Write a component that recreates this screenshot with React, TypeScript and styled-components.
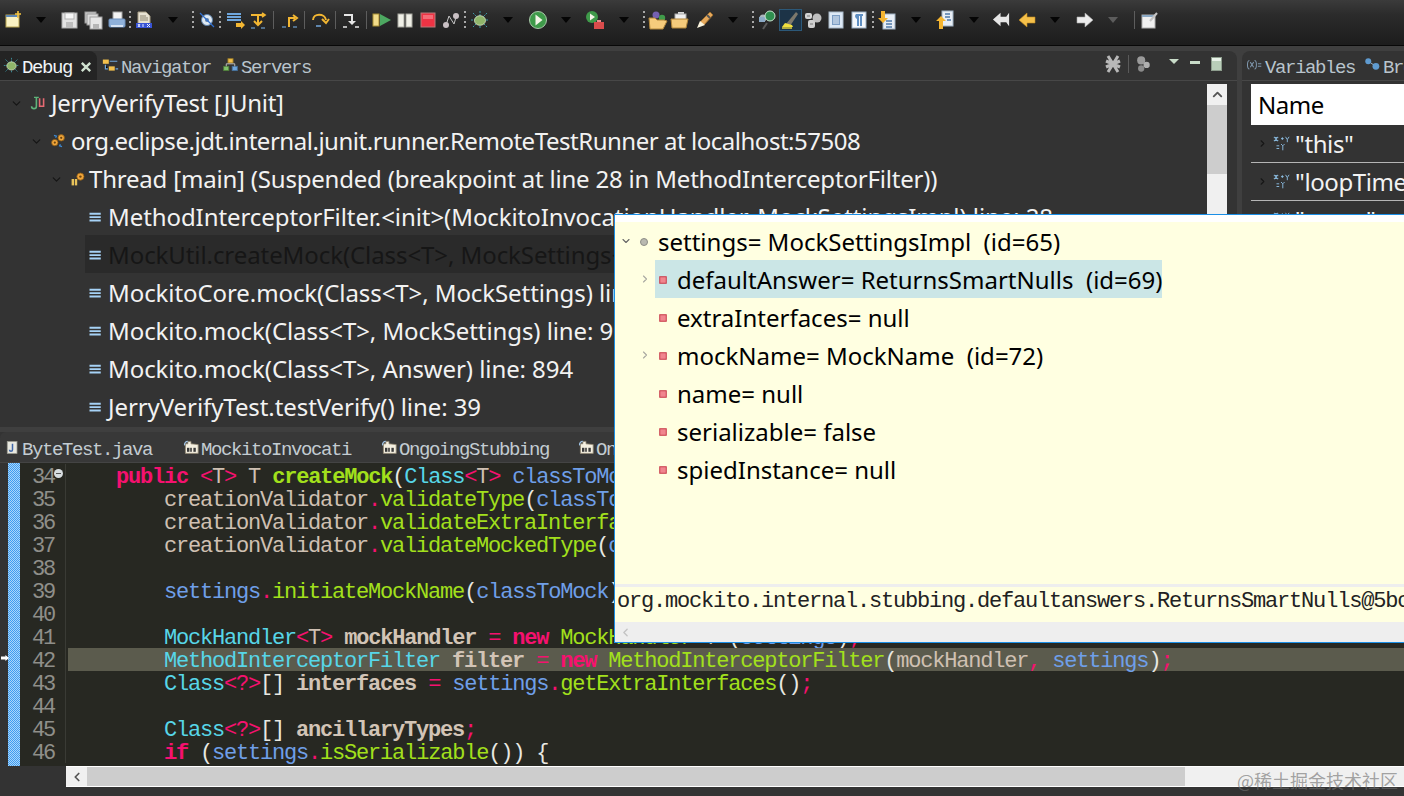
import React from 'react';
import styled, { createGlobalStyle } from 'styled-components';
import { ChevronDown, ChevronRight, ChevronUp, ChevronLeft } from 'lucide-react';

const GlobalStyle = createGlobalStyle`
  html, body { margin: 0; padding: 0; background: #333; overflow: hidden; }
  * { box-sizing: border-box; }
`;

const UI_FONT = `"Noto Sans", "Open Sans", sans-serif`;
const MONO = `"Liberation Mono", "DejaVu Sans Mono", monospace`;

const Page = styled.div`
  position: relative;
  width: 1404px;
  height: 796px;
  overflow: hidden;
  display: flex;
  flex-direction: column;
  background: #333;
`;

const Toolbar = styled.div`
  height: 46px;
  flex-shrink: 0;
  display: flex;
  align-items: center;
  padding-bottom: 6px;
  background: linear-gradient(#3b3b3b 0, #2c2c2c 14px, #1d1d1d 44px);
  border-bottom: 1px solid #080808;
`;

const Slot = styled.div<{ $gap: number }>`
  width: 12px;
  height: 24px;
  flex-shrink: 0;
  margin-left: ${p => p.$gap}px;
  display: flex;
  align-items: center;
  justify-content: center;
`;

const Drop = styled.span<{ $off?: boolean }>`
  border-left: 5px solid transparent;
  border-right: 5px solid transparent;
  border-top: 6px solid ${p => (p.$off ? '#5c5c5c' : '#050505')};
`;

const Grip = styled.span`
  width: 2px;
  height: 17px;
  flex-shrink: 0;
  background: repeating-linear-gradient(#a8a8a8 0 2px, transparent 2px 5px);
`;

const Rule = styled.span`
  width: 1px;
  height: 18px;
  flex-shrink: 0;
  background: #5d5d5d;
`;

const ActiveBox = styled.span`
  width: 23px;
  height: 22px;
  flex-shrink: 0;
  display: flex;
  align-items: center;
  justify-content: center;
  background: #1c3347;
  border: 1px solid #2c5878;
`;

const Svg = styled.svg<{ $s?: number }>`
  width: ${p => p.$s ?? 20}px;
  height: ${p => p.$s ?? 20}px;
  flex-shrink: 0;
  display: block;
`;

const Band = styled.div`
  height: 5px;
  flex-shrink: 0;
  background: #3f3f3f;
`;

const TopRow = styled.div`
  height: 376px;
  flex-shrink: 0;
  display: flex;
  background: #3f3f3f;
`;

const Panel = styled.section<{ $w: number }>`
  width: ${p => p.$w}px;
  flex-shrink: 0;
  display: flex;
  flex-direction: column;
  overflow: hidden;
  background: #333;
  border-top-right-radius: 8px;
`;

const RightPanel = styled(Panel)`
  margin-left: 5px;
  border-top-right-radius: 0;
  border-top-left-radius: 8px;
`;

const TabBar = styled.div`
  height: 30px;
  flex-shrink: 0;
  display: flex;
  align-items: center;
  border-bottom: 1px solid #474747;
`;

const Tab = styled.div<{ $w?: number; $active?: boolean; $pl?: number }>`
  height: 29px;
  width: ${p => (p.$w ? `${p.$w}px` : 'auto')};
  flex-shrink: 0;
  display: flex;
  align-items: center;
  gap: 2px;
  padding-left: ${p => p.$pl ?? 0}px;
  white-space: pre;
  color: ${p => (p.$active ? '#f0f4f8' : '#b9c4cc')};
  background: ${p => (p.$active ? '#242424' : 'transparent')};
  border-top-right-radius: ${p => (p.$active ? 8 : 0)}px;
`;

const TabLabel = styled.span`
  font: 19px/29px ${MONO};
  letter-spacing: -1.4px;
  padding-top: 6px;
`;

const TabClose = styled.span`
  margin-left: 5px;
  padding-top: 2px;
`;

const ViewActions = styled.div`
  margin-left: auto;
  margin-bottom: 3px;
  padding-right: 15px;
  display: flex;
  align-items: center;
  gap: 5px;
`;

const ActionRule = styled.span`
  width: 1px;
  height: 18px;
  background: #5a5a5a;
`;

const MenuTriangle = styled.span`
  margin: 0 0 6px 12px;
  border-left: 5px solid transparent;
  border-right: 5px solid transparent;
  border-top: 5px solid #c9dcc9;
`;

const MinBtn = styled.span`
  width: 10px;
  height: 3px;
  margin: 0 6px 4px 6px;
  background: #c9dcc9;
`;

const MaxBtn = styled.span`
  width: 11px;
  height: 14px;
  background: linear-gradient(#e8f2e8 0 3px, #b9ceb9 3px);
  border: 1px solid #8d9d8d;
`;

const DebugBody = styled.div`
  flex: 1;
  min-height: 0;
  display: flex;
  overflow: hidden;
`;

const Tree = styled.div`
  flex: 1;
  min-width: 0;
  padding-top: 2px;
  overflow: hidden;
`;

const Row = styled.div<{ $indent: number; $track: number }>`
  height: 38px;
  display: flex;
  align-items: center;
  padding-top: 2px;
  padding-left: ${p => p.$indent}px;
  white-space: nowrap;
  font: 400 24px/36px ${UI_FONT};
  letter-spacing: ${p => p.$track}px;
  color: #f2f2f2;
`;

const FrameRow = styled(Row)<{ $current?: boolean }>`
  padding-left: 0;
  margin-left: ${p => p.$indent}px;
  color: ${p => (p.$current ? '#161616' : '#f2f2f2')};
  background: ${p => (p.$current ? '#2a2a2a' : 'transparent')};
`;

const Twist = styled.span<{ $w?: number }>`
  width: ${p => p.$w ?? 20}px;
  flex-shrink: 0;
  display: flex;
  align-items: center;
`;

const IconBox = styled.span<{ $w: number }>`
  width: ${p => p.$w}px;
  flex-shrink: 0;
  display: flex;
  align-items: center;
`;

const VScroll = styled.div`
  width: 20px;
  height: 131px;
  margin: 3px 10px 0 0;
  flex-shrink: 0;
  display: flex;
  flex-direction: column;
  background: #f0f0f0;
`;

const VArrow = styled.div`
  height: 21px;
  display: flex;
  align-items: center;
  justify-content: center;
`;

const VThumb = styled.div`
  height: 69px;
  background: #cdcdcd;
`;

const VarTable = styled.div`
  margin: 3px 0 0 9px;
`;

const VarHeader = styled.div`
  height: 41px;
  padding-left: 7px;
  background: #fff;
  color: #000;
  font: 400 24px/41px ${UI_FONT};
  letter-spacing: -0.5px;
`;

const VarRow = styled.div`
  height: 38px;
  display: flex;
  align-items: center;
  padding-left: 6px;
  white-space: nowrap;
  color: #f2f2f2;
  font: 400 24px/38px ${UI_FONT};
  letter-spacing: -0.4px;
  border-bottom: 1px solid #b5b5b5;
`;

const Sash = styled.div`
  height: 5px;
  flex-shrink: 0;
  background: #3f3f3f;
`;

const Editor = styled.section`
  flex: 1;
  min-height: 0;
  display: flex;
  flex-direction: column;
  background: #333;
`;

const EditorTabs = styled.div`
  height: 31px;
  flex-shrink: 0;
  display: flex;
  align-items: center;
  padding-left: 5px;
  background: #383838;
  border-top-left-radius: 6px;
  border-bottom: 1px solid #444;
`;

const EditorTab = styled.div<{ $w: number }>`
  width: ${p => p.$w}px;
  flex-shrink: 0;
  display: flex;
  align-items: center;
  gap: 2px;
  color: #c3ccd2;
  white-space: pre;
`;

const EditorBody = styled.div`
  height: 303px;
  flex-shrink: 0;
  display: flex;
  padding-left: 8px;
`;

const ChangeStrip = styled.div`
  position: relative;
  width: 12px;
  flex-shrink: 0;
  background: repeating-conic-gradient(#3f9cf0 0 25%, #a9d6fb 0 50%) 0 0 / 2px 2px;
`;

const PointerMark = styled.span`
  position: absolute;
  left: -7px;
  top: 192px;
  width: 8px;
  height: 6px;
  background: #fff;
  clip-path: polygon(0 25%, 55% 25%, 55% 0, 100% 50%, 55% 100%, 55% 75%, 0 75%);
`;

const Lines = styled.div`
  flex: 1;
  min-width: 0;
  padding-top: 1px;
  overflow: hidden;
  background: #272822;
`;

const Line = styled.div`
  height: 23px;
  display: flex;
`;

const Gutter = styled.div`
  position: relative;
  width: 46px;
  margin-right: 2px;
  flex-shrink: 0;
  padding-right: 11px;
  text-align: right;
  color: #8f8f8a;
  font: 22px/27px ${MONO};
  letter-spacing: -2.2px;
  border-right: 1px solid #3a3b35;
`;

const FoldMark = styled.span`
  position: absolute;
  right: 2px;
  top: 5px;
  width: 9px;
  height: 9px;
  border-radius: 50%;
  background: #d8dde0;
  &::after {
    content: '';
    position: absolute;
    left: 2px;
    right: 2px;
    top: 4px;
    height: 1px;
    background: #555;
  }
`;

const Code = styled.div<{ $hot?: boolean }>`
  flex: 1;
  min-width: 0;
  white-space: pre;
  font: 22px/27px ${MONO};
  letter-spacing: -1.2px;
  height: 23px;
  color: #e6e6e0;
  background: ${p => (p.$hot ? '#5b5b4d' : 'transparent')};
`;

const tokenColors: Record<string, string> = {
  k: '#f5116f', o: '#f5116f', t: '#57d6e8', m: '#a2e01c', g: '#a2e01c',
  f: '#cfc0b2', b: '#d2c4b6', p: '#6f9fe8', w: '#e8e8e2',
};

const Tok = styled.span<{ $k: string }>`
  color: ${p => tokenColors[p.$k]};
  font-weight: ${p => (['k', 'g', 'b'].includes(p.$k) ? 700 : 400)};
`;

const HScroll = styled.div`
  height: 21px;
  flex-shrink: 0;
  margin-left: 66px;
  display: flex;
  background: #f0f0f0;
  border-top: 1px solid #fff;
  border-bottom: 1px solid #fff;
`;

const HArrow = styled.div`
  width: 21px;
  display: flex;
  align-items: center;
  justify-content: center;
`;

const HThumb = styled.div`
  width: 1098px;
  background: #cdcdcd;
`;

/* debugger hover popup, lies over the views */
const Popup = styled.div`
  position: absolute;
  left: 614px;
  top: 214px;
  right: -2px;
  height: 429px;
  display: flex;
  flex-direction: column;
  background: #ffffe1;
  border: 1px solid #1b8fe6;
  z-index: 5;
`;

const PopupTop = styled.div`
  height: 7px;
  flex-shrink: 0;
  background: #fff;
`;

const PopupTree = styled.div`
  flex: 1;
`;

const PopupRow = styled.div<{ $indent: number }>`
  height: 38px;
  display: flex;
  align-items: center;
  padding-left: ${p => p.$indent}px;
  white-space: pre;
  color: #000;
  font: 400 24px/38px ${UI_FONT};
`;

const PopupLabel = styled.span<{ $selected?: boolean }>`
  height: 38px;
  display: flex;
  align-items: center;
  padding: 2px 0 0 3px;
  background: ${p => (p.$selected ? '#cbe6e6' : 'transparent')};
`;

const DetailSash = styled.div`
  height: 3px;
  flex-shrink: 0;
  background: #eeeeee;
`;

const DetailText = styled.div`
  height: 35px;
  flex-shrink: 0;
  padding-left: 2px;
  white-space: pre;
  overflow: hidden;
  color: #222;
  font: 22px/29px ${MONO};
  letter-spacing: -1.2px;
`;

const DetailScroll = styled.div`
  height: 20px;
  flex-shrink: 0;
  display: flex;
  align-items: center;
  padding-left: 4px;
  background: #eeeeee;
`;

const Watermark = styled.div`
  position: absolute;
  right: 6px;
  bottom: 5px;
  color: rgba(110, 110, 110, 0.62);
  font: 18px/22px "Noto Sans CJK SC", "Noto Sans", sans-serif;
  z-index: 6;
`;

type IconName = keyof typeof glyphs;

const glyphs = {
  newItem: <><rect x="3" y="5" width="13" height="12" fill="#fbf3c4" stroke="#b9a552" /><path d="M3 5h13v2H3z" fill="#5d87b5" /><path d="M15 1v7M12 4h6" stroke="#f5c542" strokeWidth="1.6" /></>,
  save: <><rect x="2" y="3" width="15" height="15" fill="#e2e2e2" stroke="#a9a9a9" /><rect x="5" y="3" width="9" height="6" fill="#f7f7f7" stroke="#b4b4b4" /><rect x="6" y="12" width="7" height="6" fill="#bcbcbc" /></>,
  saveAll: <><rect x="2" y="2" width="11" height="11" fill="#cfcfcf" stroke="#9a9a9a" /><rect x="4" y="4" width="11" height="11" fill="#dcdcdc" stroke="#9a9a9a" /><rect x="7" y="7" width="12" height="12" fill="#e6e6e6" stroke="#a0a0a0" /><rect x="10" y="14" width="6" height="5" fill="#b5b5b5" /></>,
  print: <><rect x="6" y="2" width="9" height="8" fill="#f3f3f3" stroke="#a5a5a5" /><rect x="2" y="9" width="16" height="8" rx="1" fill="#8fb1da" stroke="#6d8fbc" /><rect x="4" y="15" width="12" height="2" fill="#d6e3f3" /></>,
  jar: <><path d="M4 2h8l4 4v8H4z" fill="#e7e2d3" stroke="#a69c84" /><path d="M6 6h6M6 8h8M6 10h8" stroke="#8c8570" /><rect x="2" y="13" width="16" height="5" fill="#3854d6" /><path d="M4 14l2 3M6 14l-2 3M9 14v3M13 14l3 3M16 14l-3 3" stroke="#e8ecff" /></>,
  skip: <><circle cx="10" cy="10" r="5.5" fill="#dfe9f2" stroke="#5b7fa8" /><circle cx="10" cy="10" r="2" fill="#5b7fa8" /><path d="M3 3l14 14" stroke="#2f6fd0" strokeWidth="1.3" /></>,
  collapse: <><path d="M2 4h14M2 7h14M2 10h14" stroke="#6fa6dc" strokeWidth="2" /><path d="M11 13h5v-2l4 4-4 4v-2h-5z" fill="#f2b632" /></>,
  stepInto: <><path d="M3 5h14M10 5v9" stroke="#f2b632" strokeWidth="2" /><path d="M6 11l4 4 4-4" fill="none" stroke="#f2b632" strokeWidth="2" /><path d="M14 3l3 2-3 2" fill="none" stroke="#f2b632" strokeWidth="1.6" /><path d="M3 18h4M13 18h4" stroke="#5f86ad" strokeWidth="1.4" /></>,
  stepOver: <><path d="M2 17h4M13 17h4" stroke="#5f86ad" strokeWidth="1.4" /><path d="M9 17v-9h6" fill="none" stroke="#f2b632" strokeWidth="2" /><path d="M13 5l4 3-4 3" fill="none" stroke="#f2b632" strokeWidth="2" /></>,
  stepLoop: <><path d="M3 10c0-7 12-7 13 0" fill="none" stroke="#f2b632" strokeWidth="2" /><path d="M12 9l4 4 3-4" fill="none" stroke="#f2b632" strokeWidth="2" /><path d="M6 16h5" stroke="#5f86ad" strokeWidth="2" /></>,
  stepReturn: <><path d="M3 5h8v9" fill="none" stroke="#e6e6e6" strokeWidth="2" /><path d="M7 11l4 4 4-4z" fill="#e6e6e6" /><path d="M2 17h4M14 17h4" stroke="#e6e6e6" strokeWidth="1.6" /></>,
  resume: <><rect x="1" y="4" width="6" height="12" fill="#f2dc8a" stroke="#a89035" /><path d="M8 4l11 6-11 6z" fill="#4da861" /></>,
  pause: <><rect x="3" y="4" width="6" height="13" fill="#efefe6" stroke="#a8a8a0" /><rect x="11" y="4" width="6" height="13" fill="#efefe6" stroke="#a8a8a0" /></>,
  stop: <><rect x="3" y="3" width="14" height="14" fill="#ee3344" stroke="#b87a7a" /><rect x="5" y="5" width="10" height="4" fill="#f56b76" /></>,
  disconnect: <><path d="M5 15l3-9 5 8 3-10" fill="none" stroke="#c4c4c4" strokeWidth="1" /><circle cx="5" cy="15" r="3" fill="#c9c0c4" /><circle cx="15" cy="6" r="3" fill="#c9c0c4" /></>,
  bug: <><path d="M10 1v18M1 10h18M3 3l14 14M17 3L3 17" stroke="#3d9aa8" strokeWidth="1" strokeDasharray="2 1" /><ellipse cx="10" cy="10.5" rx="5.5" ry="4.8" fill="#8fb56a" stroke="#d5e5c5" strokeWidth=".8" /></>,
  run: <><circle cx="10" cy="10" r="8.5" fill="#3f9a4a" stroke="#a9c9a9" /><path d="M7.5 4.5l7 5.5-7 5.5z" fill="#f4f4e8" /></>,
  runTool: <><circle cx="7" cy="7" r="6" fill="#3f9a4a" /><path d="M5 3.5l5 3.5-5 3.5z" fill="#f4f4e8" /><rect x="9" y="12" width="10" height="7" fill="#d94c4c" /><rect x="12" y="10" width="4" height="2" fill="#e58f8f" /></>,
  openType: <><circle cx="8" cy="5" r="3.5" fill="#7460b0" /><circle cx="14" cy="8" r="3.2" fill="#3f9a4a" /><path d="M1 8h6l2 2h7l3 1-4 8H2z" fill="#f5cb7c" stroke="#b2863a" /></>,
  openRes: <><rect x="8" y="2" width="6" height="3" fill="#d9d9d9" /><rect x="5" y="4" width="11" height="7" fill="#f0f0f0" stroke="#aaa" /><path d="M1 9h17l-2 9H2z" fill="#f5cb7c" stroke="#b2863a" /></>,
  brush: <><path d="M5 12L15 2l3 3L9 15z" fill="#e6a95c" stroke="#9a6c2f" /><path d="M12 5l3 3" stroke="#555" strokeWidth="2" /><path d="M2 18l3-7 5 4z" fill="#fbf5df" /></>,
  cGear: <><circle cx="6" cy="8" r="3.5" fill="#aab4bb" /><rect x="2" y="7" width="6" height="5" fill="#8ba9c5" /><circle cx="13" cy="6" r="5" fill="#2f8f4f" stroke="#c9e4d0" /><path d="M6 19l4-6" stroke="#5a5a5a" strokeWidth="2" /></>,
  marker: <><path d="M6 14L16 2l2 2-8 12z" fill="#7d786c" /><path d="M2 17h11l-1-2-7-2z" fill="#f1df3e" /><path d="M2 18h10" stroke="#f1df3e" strokeWidth="1.4" /></>,
  blocks: <><rect x="2" y="3" width="7" height="6" rx="2" fill="#d4d4d4" /><circle cx="14" cy="8" r="4.5" fill="#bdbdbd" /><rect x="5" y="10" width="7" height="8" rx="2" fill="#cfcfcf" /><path d="M4 6h3M7 14h3" stroke="#777" /></>,
  doc: <><rect x="3" y="2" width="14" height="16" fill="#dde9f5" stroke="#aab9c8" /><rect x="6" y="5" width="8" height="10" fill="#7d9ec4" /><path d="M7 7h6M7 9h6M7 11h6M7 13h6" stroke="#e6eef7" /></>,
  para: <><rect x="3" y="2" width="14" height="16" fill="#f3f7fb" stroke="#9cb1c6" /><path d="M7 4h7v2h-1v10h-2V6h-1v10H8V9a3 3 0 01-1-5z" fill="#5f8fc2" /></>,
  nextAnn: <><rect x="6" y="4" width="12" height="15" fill="#e8eef5" stroke="#9fb1c3" /><path d="M9 11h6M9 14h6M9 17h6" stroke="#4f79a8" strokeWidth="1.4" /><path d="M4 1h4v7h3l-5 5-5-5h3z" fill="#f5b530" /></>,
  prevAnn: <><rect x="7" y="1" width="11" height="15" fill="#e8eef5" stroke="#9fb1c3" /><path d="M10 4h5M10 7h5M12 10h4" stroke="#4f79a8" strokeWidth="1.4" /><path d="M6 6l5 5H8v8H4v-8H1z" fill="#f5b530" /></>,
  backEdit: <><path d="M9 3v4h6l3-4v14l-3-4H9v4L1 10z" transform="scale(.95)" fill="#e6e6e6" /></>,
  back: <><path d="M10 3v4h8v6h-8v4l-8-7z" fill="#f5c04a" stroke="#c08a1f" strokeWidth=".6" /></>,
  forward: <><path d="M10 3v4H2v6h8v4l8-7z" fill="#ececec" stroke="#aaa" strokeWidth=".6" /></>,
  pin: <><rect x="2" y="5" width="13" height="13" fill="#f0f0f0" stroke="#b0b0b0" /><path d="M2 5h13v2H2z" fill="#8ba9c5" /><path d="M10 11l7-8" stroke="#c4c4c4" strokeWidth="2" /></>,
  close: <><path d="M4 4l12 12M16 4L4 16" stroke="#cfe0cf" strokeWidth="3.4" /></>,
  navigator: <><rect x="1" y="3" width="7" height="5" fill="#f2c04d" /><rect x="8" y="11" width="7" height="5" fill="#f2c04d" /><path d="M9 5h9M4 9v5h3M16 14h3" stroke="#6fa6dc" strokeWidth="1.4" /></>,
  servers: <><rect x="7" y="2" width="6" height="5" fill="#f2c04d" stroke="#9a7a25" /><rect x="2" y="11" width="6" height="5" fill="#7fc06a" stroke="#4f7f3a" /><rect x="12" y="11" width="6" height="5" fill="#6fa6dc" stroke="#44709c" /><path d="M5 11V8h10v3" fill="none" stroke="#cfcfcf" /></>,
  junit: <><path d="M8 3v11a3 3 0 01-6 0" fill="none" stroke="#5fb37a" strokeWidth="2" /><path d="M5 3h6" stroke="#5fb37a" strokeWidth="1.5" /><path d="M12 4v10h5V4" fill="none" stroke="#e56a72" strokeWidth="2" /></>,
  target: <><circle cx="6" cy="12" r="4" fill="#f0a53a" stroke="#8a5a15" /><circle cx="14" cy="6" r="4" fill="#f0a53a" stroke="#8a5a15" /><circle cx="6" cy="12" r="1.4" fill="#6b4510" /><circle cx="14" cy="6" r="1.4" fill="#6b4510" /><path d="M5 3l3 1-1 2M15 17l-3-1 1-2" stroke="#3d87cf" fill="none" strokeWidth="1.6" /></>,
  thread: <><rect x="2" y="10" width="3" height="8" fill="#e8c35a" /><rect x="6" y="10" width="3" height="8" fill="#e8c35a" /><circle cx="13" cy="7" r="4.5" fill="#f0a53a" stroke="#8a5a15" /><circle cx="13" cy="7" r="1.5" fill="#6b4510" /></>,
  frame: <><path d="M2 5h15M2 9.5h15M2 14h15" stroke="#a6d2f6" strokeWidth="2.4" /></>,
  field: <><rect x="3.5" y="3.5" width="13" height="13" fill="#f0868e" stroke="#c83a48" strokeWidth="2" /></>,
  local: <><circle cx="10" cy="10" r="7" fill="#b9b9b0" stroke="#8d8d86" strokeWidth="2" /></>,
  varTree: <><path d="M2 3h5M2 6h5M3 2l3 5M6 2L3 7M10 4h3M11.5 2.5v3M15 2l2 3 2-3M17 5v3M5 12h3M5 15h3M10 10l2 2 2-2M12 12v5" stroke="#8fc2e8" fill="none" /></>,
  variables: <><path d="M4 4c-3 0-3 10 0 10M10 4c3 0 3 10 0 10M5 6l4 6M9 6l-4 6M14 8h4M14 11h4" stroke="#7f97ad" fill="none" strokeWidth="1.2" /></>,
  breakpoints: <><circle cx="5" cy="5" r="3.5" fill="#5f9bd0" /><circle cx="14" cy="11" r="4" fill="#5f9bd0" /><path d="M8 7l3 2" stroke="#a8c8e4" /></>,
  javaFile: <><rect x="3" y="2" width="13" height="16" fill="#e8e8e0" stroke="#9a9a90" /><path d="M10 5v8a2 2 0 01-4 0" fill="none" stroke="#3f66a8" strokeWidth="2" /></>,
  classFile: <><path d="M3 6h3V3h4v3l9 1v11H3z" fill="#f4efe0" stroke="#8d8470" /><path d="M2 8a4 4 0 014-5" stroke="#9fc2e4" fill="none" strokeWidth="1.5" /><rect x="5" y="11" width="3" height="5" fill="#3a3a3a" /><rect x="9" y="11" width="2" height="5" fill="#3a3a3a" /><rect x="13" y="11" width="3" height="5" fill="#3a3a3a" /></>,
  clearAll: <><path d="M5 2l10 16M15 2L5 18M3 7l14 6M17 7L3 13" stroke="#b8b8b8" strokeWidth="3" /></>,
  gears: <><circle cx="8" cy="6" r="4.5" fill="#9a9a9a" /><circle cx="14" cy="11" r="3.5" fill="#b0b0b0" /><circle cx="8" cy="15" r="3.5" fill="#8a8a8a" /></>,
} as const;

const Icon = ({ name, size }: { name: IconName; size?: number }) => (
  <Svg $s={size} viewBox="0 0 20 20">{glyphs[name]}</Svg>
);

type ToolItem = { x: number; icon?: IconName; kind?: 'drop' | 'dropOff' | 'grip' | 'rule' | 'active' };

const tools: ToolItem[] = [
  { x: 13, icon: 'newItem' }, { x: 41, kind: 'drop' }, { x: 70, icon: 'save' }, { x: 93, icon: 'saveAll' },
  { x: 117, icon: 'print' }, { x: 130, kind: 'grip' }, { x: 144, icon: 'jar' }, { x: 173, kind: 'drop' },
  { x: 193, kind: 'grip' }, { x: 207, icon: 'skip' }, { x: 220, kind: 'grip' }, { x: 235, icon: 'collapse' },
  { x: 258, icon: 'stepInto' }, { x: 273, kind: 'rule' }, { x: 290, icon: 'stepOver' }, { x: 304, kind: 'rule' },
  { x: 320, icon: 'stepLoop' }, { x: 335, kind: 'rule' }, { x: 351, icon: 'stepReturn' }, { x: 366, kind: 'rule' },
  { x: 382, icon: 'resume' }, { x: 405, icon: 'pause' }, { x: 428, icon: 'stop' }, { x: 451, icon: 'disconnect' },
  { x: 465, kind: 'grip' }, { x: 480, icon: 'bug' }, { x: 508, kind: 'drop' }, { x: 538, icon: 'run' },
  { x: 566, kind: 'drop' }, { x: 595, icon: 'runTool' }, { x: 624, kind: 'drop' }, { x: 644, kind: 'grip' },
  { x: 658, icon: 'openType' }, { x: 680, icon: 'openRes' }, { x: 705, icon: 'brush' }, { x: 733, kind: 'drop' },
  { x: 753, kind: 'grip' }, { x: 767, icon: 'cGear' }, { x: 790, icon: 'marker', kind: 'active' }, { x: 813, icon: 'blocks' },
  { x: 836, icon: 'doc' }, { x: 859, icon: 'para' }, { x: 873, kind: 'grip' }, { x: 887, icon: 'nextAnn' },
  { x: 916, kind: 'drop' }, { x: 945, icon: 'prevAnn' }, { x: 974, kind: 'drop' }, { x: 1002, icon: 'backEdit' },
  { x: 1027, icon: 'back' }, { x: 1055, kind: 'drop' }, { x: 1085, icon: 'forward' }, { x: 1113, kind: 'dropOff' },
  { x: 1134, kind: 'rule' }, { x: 1150, icon: 'pin' },
];

const ToolSlot = ({ item }: { item: ToolItem }) => {
  if (item.kind === 'drop') return <Drop />;
  if (item.kind === 'dropOff') return <Drop $off />;
  if (item.kind === 'grip') return <Grip />;
  if (item.kind === 'rule') return <Rule />;
  if (item.kind === 'active') return <ActiveBox><Icon name={item.icon!} /></ActiveBox>;
  return <Icon name={item.icon!} />;
};

type Tk = [string, string];

const G: Tk = ['w', '('];
const codeLines: { n: number; hot?: boolean; fold?: boolean; toks: Tk[] }[] = [
  { n: 34, fold: true, toks: [['w', '    '], ['k', 'public'], ['w', ' '], ['o', '<'], ['f', 'T'], ['o', '>'], ['w', ' '], ['f', 'T'], ['w', ' '], ['g', 'createMock'], G, ['t', 'Class'], ['o', '<'], ['f', 'T'], ['o', '>'], ['w', ' '], ['p', 'classToMock'], ['o', ','], ['w', ' '], ['t', 'MockSettings'], ['o', '<'], ['f', 'T'], ['o', '>'], ['w', ' '], ['p', 'settings'], ['w', ') {']] },
  { n: 35, toks: [['w', '        '], ['f', 'creationValidator'], ['o', '.'], ['m', 'validateType'], G, ['p', 'classToMock'], ['w', ')'], ['o', ';']] },
  { n: 36, toks: [['w', '        '], ['f', 'creationValidator'], ['o', '.'], ['m', 'validateExtraInterfaces'], G, ['p', 'classToMock'], ['o', ','], ['w', ' '], ['p', 'settings'], ['o', '.'], ['m', 'getExtraInterfaces'], ['w', '())'], ['o', ';']] },
  { n: 37, toks: [['w', '        '], ['f', 'creationValidator'], ['o', '.'], ['m', 'validateMockedType'], G, ['p', 'classToMock'], ['o', ','], ['w', ' '], ['p', 'settings'], ['w', ')'], ['o', ';']] },
  { n: 38, toks: [] },
  { n: 39, toks: [['w', '        '], ['p', 'settings'], ['o', '.'], ['m', 'initiateMockName'], G, ['p', 'classToMock'], ['w', ')'], ['o', ';']] },
  { n: 40, toks: [] },
  { n: 41, toks: [['w', '        '], ['t', 'MockHandler'], ['o', '<'], ['f', 'T'], ['o', '>'], ['w', ' '], ['b', 'mockHandler'], ['w', ' '], ['o', '='], ['w', ' '], ['k', 'new'], ['w', ' '], ['m', 'MockHandler'], ['o', '<'], ['f', 'T'], ['o', '>'], G, ['p', 'settings'], ['w', ')'], ['o', ';']] },
  { n: 42, hot: true, toks: [['w', '        '], ['t', 'MethodInterceptorFilter'], ['w', ' '], ['b', 'filter'], ['w', ' '], ['o', '='], ['w', ' '], ['k', 'new'], ['w', ' '], ['m', 'MethodInterceptorFilter'], G, ['f', 'mockHandler'], ['o', ','], ['w', ' '], ['p', 'settings'], ['w', ')'], ['o', ';']] },
  { n: 43, toks: [['w', '        '], ['t', 'Class'], ['o', '<?>'], ['w', '[] '], ['b', 'interfaces'], ['w', ' '], ['o', '='], ['w', ' '], ['p', 'settings'], ['o', '.'], ['m', 'getExtraInterfaces'], ['w', '()'], ['o', ';']] },
  { n: 44, toks: [] },
  { n: 45, toks: [['w', '        '], ['t', 'Class'], ['o', '<?>'], ['w', '[] '], ['b', 'ancillaryTypes'], ['o', ';']] },
  { n: 46, toks: [['w', '        '], ['k', 'if'], ['w', ' ('], ['p', 'settings'], ['o', '.'], ['m', 'isSerializable'], ['w', '()) {']] },
];

const frames = [
  'MethodInterceptorFilter.<init>(MockitoInvocationHandler, MockSettingsImpl) line: 28',
  'MockUtil.createMock(Class<T>, MockSettings<T>) line: 42',
  'MockitoCore.mock(Class<T>, MockSettings) line: 92',
  'Mockito.mock(Class<T>, MockSettings) line: 903',
  'Mockito.mock(Class<T>, Answer) line: 894',
  'JerryVerifyTest.testVerify() line: 39',
];

const fields: { text: string; more?: boolean; selected?: boolean }[] = [
  { text: 'defaultAnswer= ReturnsSmartNulls  (id=69)', more: true, selected: true },
  { text: 'extraInterfaces= null' },
  { text: 'mockName= MockName  (id=72)', more: true },
  { text: 'name= null' },
  { text: 'serializable= false' },
  { text: 'spiedInstance= null' },
];

const editorTabs: { label: string; w: number; icon: IconName }[] = [
  { label: 'ByteTest.java', w: 178, icon: 'javaFile' },
  { label: 'MockitoInvocati', w: 198, icon: 'classFile' },
  { label: 'OngoingStubbing', w: 197, icon: 'classFile' },
  { label: 'OngoingStubbing', w: 200, icon: 'classFile' },
];

export default function App() {
  return (
    <Page>
      <GlobalStyle />
      <Toolbar>
        {tools.map((t, i) => (
          <Slot key={i} $gap={i === 0 ? t.x - 6 : t.x - tools[i - 1].x - 12}>
            <ToolSlot item={t} />
          </Slot>
        ))}
      </Toolbar>
      <Band />
      <TopRow>
        <Panel $w={1237}>
          <TabBar>
            <Tab $w={97} $pl={3} $active>
              <Icon name="bug" size={17} /><TabLabel>Debug</TabLabel>
              <TabClose><Icon name="close" size={14} /></TabClose>
            </Tab>
            <Tab $w={125} $pl={5}><Icon name="navigator" size={17} /><TabLabel>Navigator</TabLabel></Tab>
            <Tab><Icon name="servers" size={17} /><TabLabel>Servers</TabLabel></Tab>
            <ViewActions>
              <Icon name="clearAll" />
              <ActionRule />
              <Icon name="gears" size={18} />
              <MenuTriangle />
              <MinBtn />
              <MaxBtn />
            </ViewActions>
          </TabBar>
          <DebugBody>
            <Tree>
              <Row $indent={10} $track={-0.3}>
                <Twist><ChevronDown size={13} color="#161616" strokeWidth={2.4} /></Twist>
                <IconBox $w={21}><Icon name="junit" size={16} /></IconBox>
                JerryVerifyTest [JUnit]
              </Row>
              <Row $indent={30} $track={-0.47}>
                <Twist><ChevronDown size={13} color="#161616" strokeWidth={2.4} /></Twist>
                <IconBox $w={21}><Icon name="target" size={16} /></IconBox>
                org.eclipse.jdt.internal.junit.runner.RemoteTestRunner at localhost:57508
              </Row>
              <Row $indent={50} $track={-0.2}>
                <Twist><ChevronDown size={13} color="#161616" strokeWidth={2.4} /></Twist>
                <IconBox $w={19}><Icon name="thread" size={16} /></IconBox>
                Thread [main] (Suspended (breakpoint at line 28 in MethodInterceptorFilter))
              </Row>
              {frames.map((f, i) => (
                <FrameRow key={f} $indent={85} $track={-0.08} $current={i === 1}>
                  <IconBox $w={23}><Twist $w={3} /><Icon name="frame" size={15} /></IconBox>
                  {f}
                </FrameRow>
              ))}
            </Tree>
            <VScroll>
              <VArrow><ChevronUp size={15} color="#555" strokeWidth={3} /></VArrow>
              <VThumb />
            </VScroll>
          </DebugBody>
        </Panel>
        <RightPanel $w={162}>
          <TabBar>
            <Tab $pl={4}><Icon name="variables" size={17} /><TabLabel>Variables</TabLabel></Tab>
            <Tab $pl={9}><Icon name="breakpoints" size={17} /><TabLabel>Breakpoints</TabLabel></Tab>
          </TabBar>
          <VarTable>
            <VarHeader>Name</VarHeader>
            {['"this"', '"loopTimes"', '"name"'].map(v => (
              <VarRow key={v}>
                <Twist $w={15}><ChevronRight size={11} color="#161616" strokeWidth={2.4} /></Twist>
                <IconBox $w={23}><Icon name="varTree" size={18} /></IconBox>
                {v}
              </VarRow>
            ))}
          </VarTable>
        </RightPanel>
      </TopRow>
      <Sash />
      <Editor>
        <EditorTabs>
          {editorTabs.map((t, i) => (
            <EditorTab key={i} $w={t.w}>
              <Icon name={t.icon} size={i === 0 ? 15 : 16} />
              <TabLabel>{t.label}</TabLabel>
            </EditorTab>
          ))}
        </EditorTabs>
        <EditorBody>
          <ChangeStrip><PointerMark /></ChangeStrip>
          <Lines>
            {codeLines.map(l => (
              <Line key={l.n}>
                <Gutter>
                  {l.n}
                  {l.fold && <FoldMark />}
                </Gutter>
                <Code $hot={l.hot}>
                  {l.toks.map((t, i) => <Tok key={i} $k={t[0]}>{t[1]}</Tok>)}
                </Code>
              </Line>
            ))}
          </Lines>
        </EditorBody>
        <HScroll>
          <HArrow><ChevronLeft size={14} color="#555" strokeWidth={3} /></HArrow>
          <HThumb />
        </HScroll>
      </Editor>
      <Popup>
        <PopupTop />
        <PopupTree>
          <PopupRow $indent={5}>
            <Twist $w={16}><ChevronDown size={12} color="#666" strokeWidth={2.2} /></Twist>
            <PopupLabel>
              <IconBox $w={19}><Icon name="local" size={10} /></IconBox>
              settings= MockSettingsImpl  (id=65)
            </PopupLabel>
          </PopupRow>
          {fields.map(f => (
            <PopupRow key={f.text} $indent={24}>
              <Twist $w={16}>{f.more && <ChevronRight size={12} color="#a8a8a0" strokeWidth={2.2} />}</Twist>
              <PopupLabel $selected={f.selected}>
                <IconBox $w={19}><Icon name="field" size={10} /></IconBox>
                {f.text}
              </PopupLabel>
            </PopupRow>
          ))}
        </PopupTree>
        <DetailSash />
        <DetailText>org.mockito.internal.stubbing.defaultanswers.ReturnsSmartNulls@5bc</DetailText>
        <DetailScroll><ChevronLeft size={13} color="#c4c4c4" strokeWidth={2.6} /></DetailScroll>
      </Popup>
      <Watermark>@稀土掘金技术社区</Watermark>
    </Page>
  );
}
